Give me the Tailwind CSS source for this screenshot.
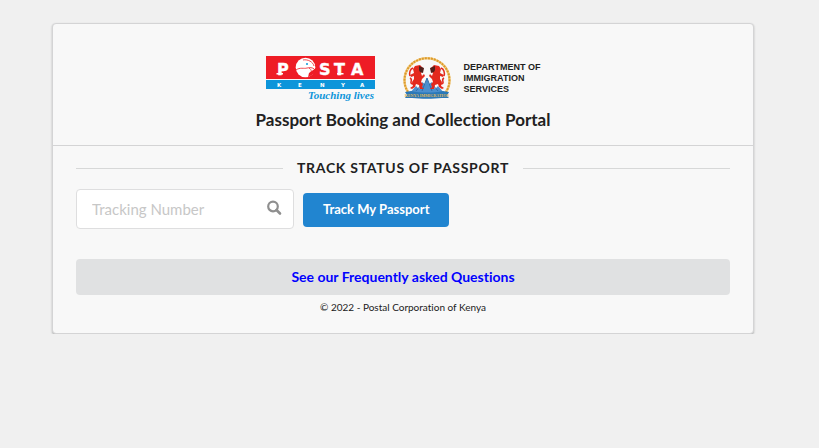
<!DOCTYPE html>
<html lang="en">
<head>
    <meta charset="UTF-8">
    <meta name="viewport" content="width=device-width, initial-scale=1.0">
    <title>Passport Booking and Collection Portal</title>
    <script src="https://cdn.jsdelivr.net/npm/@tailwindcss/browser@4"></script>
</head>
<body class="bg-[#f0f0f0] font-['Lato',sans-serif] text-[#212121] [font-variant-ligatures:none]">
    <main class="pt-[23px] pl-[52px] pr-[65px]">
        <div class="bg-[#f8f8f8] border border-[#d4d4d5] rounded shadow-[0_1px_2px_0_rgba(34,36,38,0.3)]">

            <header class="flex flex-col items-center border-b border-[#d4d4d5] pt-8 pb-3">
                <div class="flex items-start gap-6">
                    <!-- Posta Kenya -->
                    <svg class="w-[112px] h-[46px]" viewBox="0 0 112 46" role="img" aria-label="Posta Kenya">
                        <rect width="109" height="23" fill="#ee1c25"/>
                        <rect y="24" width="109" height="9" fill="#0d95da"/>
                        <g fill="#fff" stroke="#fff" stroke-width="0.400" font-family="'DejaVu Sans', sans-serif" font-weight="bold" font-size="16">
                            <text x="11 53 68 85" y="18.500">PSTA</text>
                        </g>
                        <path d="M10.500 18.600 H17 V17 H10.500 Z M71 18.600 H77.500 V17 H71 Z" fill="#fff"/>
                        <circle cx="39.500" cy="11.500" r="9.800" fill="#fff"/>
                        <path d="M30 14 C34 11 38 13 41 12 C45 11 48 12 49 14 M43 12 C46 14 46 16 43 19 M37 4 C42 3 47 6 48 10" fill="none" stroke="#ee1c25" stroke-width="0.800"/>
                        <path d="M43 17 L50 12 L49 17 L42 21.500 Z" fill="#ee1c25"/>
                        <circle cx="41" cy="8" r="1" fill="#0d95da"/>
                        <text x="11 32 54 75 94" y="30.500" fill="#fff" font-family="'DejaVu Sans', sans-serif" font-weight="bold" font-size="5.500">KENYA</text>
                        <text x="42" y="43" fill="#0d95da" font-family="'Liberation Serif', serif" font-style="italic" font-weight="bold" font-size="11">Touching lives</text>
                    </svg>

                    <!-- Department of Immigration Services -->
                    <div class="flex items-start gap-3">
                        <svg class="w-[50px] h-[46px]" viewBox="0 0 50 46" role="img" aria-label="Kenya Immigration">
                            <path d="M6 36 A22.500 22 0 1 1 44 36" fill="none" stroke="#f3cf86" stroke-width="2.500"/>
                            <path d="M6 36 A22.500 22 0 1 1 44 36" fill="none" stroke="#dc9a2c" stroke-width="2" stroke-dasharray="2 1"/>
                            <path d="M7 38 L14 30 L17 33 L20 26 L23 28 L25 22 L27 28 L30 26 L33 33 L36 30 L43 38 Z" fill="#4b8fce"/>
                            <path d="M20 35 L25 22 L30 35 M14 35 L20 28 M36 35 L30 28" fill="none" stroke="#2f6dab" stroke-width="1"/>
                            <g id="lion">
                                <path d="M13 10 L18 9 L21 12 L21 15 L19 17 L20 20 L22 18 L23 20 L20 23 L19 26 L21 28 L20 31 L22 33 L18 33 L17 29 L14 28 L13 31 L10 33 L8 32 L11 30 L10 26 L12 23 L12 20 L9 21 L8 19 L12 17 L11 13 Z" fill="#e3291d"/>
                                <path d="M17 10 L22 12 L21 17 L18 16 L17 14 Z" fill="#53201b"/>
                                <path d="M11 28 C6 27 12 24 8 22 M8 20 C7 17 8 13 11 12" fill="none" stroke="#e3291d" stroke-width="1.500"/>
                            </g>
                            <use href="#lion" transform="translate(50 0) scale(-1 1)"/>
                            <path d="M3 36 L9 35 C19 37 31 37 41 35 L47 36 L45 40 L47 42 L40 42 C31 43 19 43 10 42 L3 42 L5 39 Z" fill="#2a78b8"/>
                            <text x="25" y="41" text-anchor="middle" fill="#dfb758" font-family="'Liberation Serif', serif" font-weight="bold" font-size="4">KENYA IMMIGRATION</text>
                        </svg>
                        <p class="pt-1.5 font-['Liberation_Sans',sans-serif] text-[9px] leading-[11px] font-bold">DEPARTMENT OF<br>IMMIGRATION<br>SERVICES</p>
                    </div>
                </div>
                <h1 class="mt-1 text-[17px] leading-[27px] font-bold">Passport Booking and Collection Portal</h1>
            </header>

            <section class="px-[23px] pt-3 pb-4">
                <h2 class="flex items-center gap-3.5 text-sm leading-5 font-bold uppercase tracking-wider before:h-px before:flex-1 before:bg-[#d7d8d8] after:h-px after:flex-1 after:bg-[#d7d8d8]">Track status of passport</h2>

                <form class="mt-[11px] flex items-center gap-[9px]">
                    <div class="relative w-[218px]">
                        <input type="text" name="tracking" aria-label="Tracking Number" placeholder="Tracking Number" class="block h-10 w-full rounded border border-[#dededf] bg-white pl-[15px] pr-10 text-[15px] placeholder:text-[#c7c7c7] focus:border-[#85b7d9] focus:outline-none">
                        <svg class="absolute right-3 top-[11px] size-4" viewBox="0 0 16 16" fill="none" stroke="#8f8f8f" aria-hidden="true">
                            <circle cx="7" cy="6.500" r="4.800" stroke-width="2.200"/>
                            <path d="M10.500 10 L14 13.500" stroke-width="2.600" stroke-linecap="round"/>
                        </svg>
                    </div>
                    <button type="submit" class="mt-0.5 h-[34px] rounded bg-[#2185d0] px-5 text-[13px] font-bold text-white hover:bg-[#1678c2]">Track My Passport</button>
                </form>

                <a href="#faq" class="mt-[30px] block rounded bg-[#e0e1e2] py-2 text-center text-sm leading-5 font-bold text-[#0000ff] hover:bg-[#cacbcd]">See our Frequently asked Questions</a>
                <p class="mt-1 pb-0.5 text-center text-[10px] leading-4">© 2022 - Postal Corporation of Kenya</p>
            </section>
        </div>
    </main>
</body>
</html>
